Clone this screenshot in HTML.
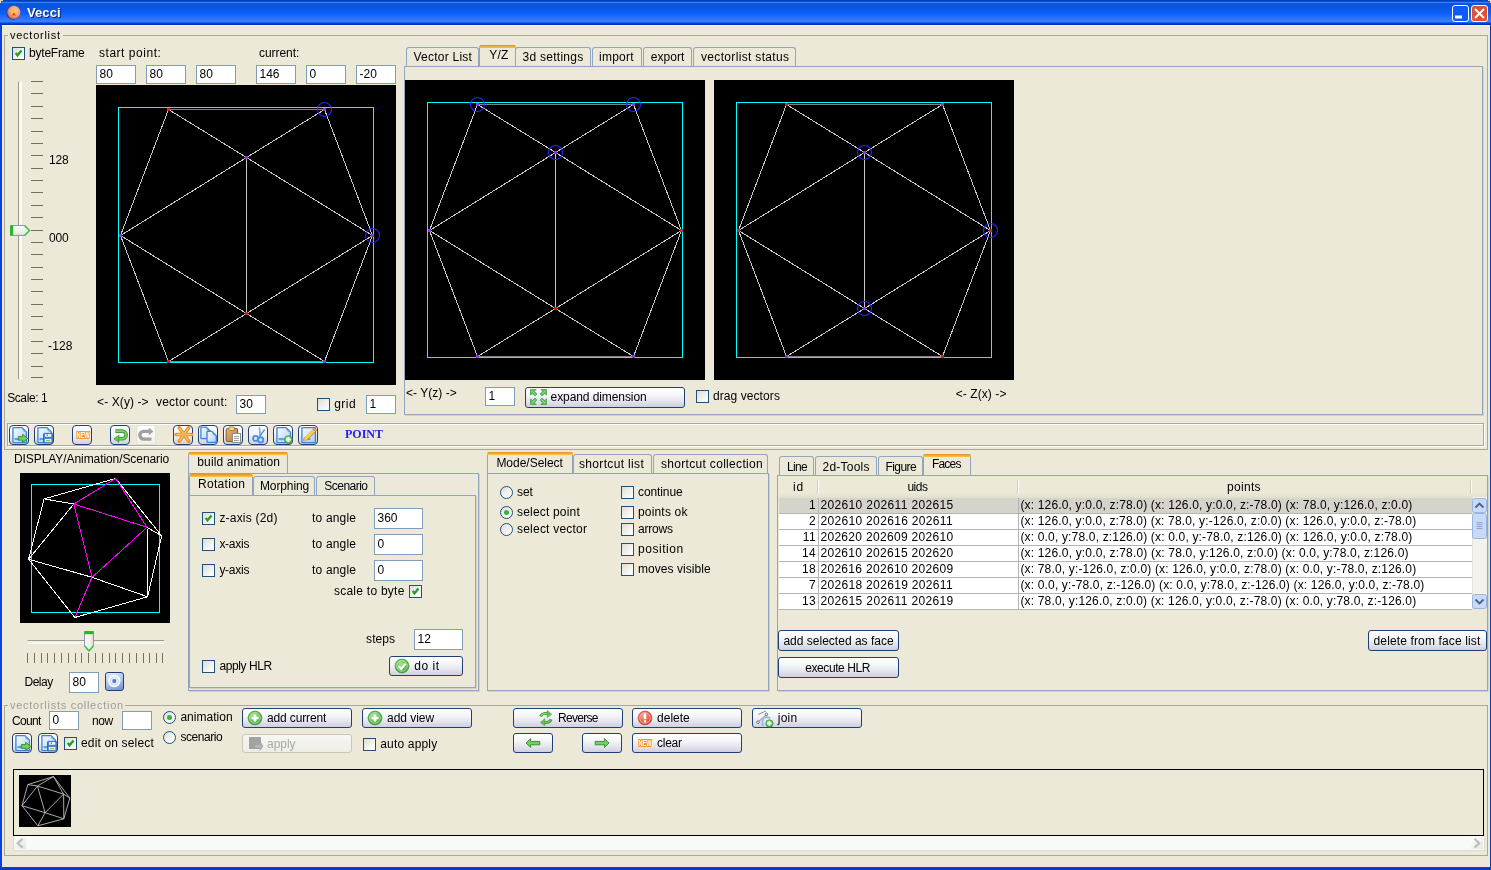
<!DOCTYPE html>
<html><head><meta charset="utf-8"><title>Vecci</title><style>
*{margin:0;padding:0;box-sizing:border-box}
html,body{width:1491px;height:870px;overflow:hidden;background:#ECE9D8;font-family:'Liberation Sans', sans-serif;font-size:12px;color:#000}
#root{position:absolute;left:0;top:0;width:1491px;height:870px;overflow:hidden;will-change:transform;background:#ECE9D8}
.t{position:absolute;white-space:pre}
svg{display:block}
</style></head><body><div id="root">
<div style="position:absolute;left:0;top:0;width:1491px;height:25px;background:linear-gradient(#0036B0 0px,#0A4FD8 1.5px,#3A80F8 2.5px,#0855F5 3.5px,#0A54E0 5px,#0C56E6 9px,#0A60FF 13.5px,#1E6AFF 16px,#3478FF 20px,#3A80FF 21.5px,#1860F0 22.5px,#0840C8 23.5px,#0032B8 24.5px);"></div>
<div style="position:absolute;left:0px;top:25px;width:2px;height:845px;background:#0842DC;"></div>
<div style="position:absolute;left:0px;top:0px;width:3px;height:1px;background:#D8D6C4;"></div>
<div style="position:absolute;left:0px;top:1px;width:1px;height:2px;background:#D8D6C4;"></div>
<div style="position:absolute;left:1488px;top:0px;width:3px;height:1px;background:#D8D6C4;"></div>
<div style="position:absolute;left:1490px;top:1px;width:1px;height:2px;background:#D8D6C4;"></div>
<div style="position:absolute;left:1490px;top:25px;width:1px;height:845px;background:#0A36B4;"></div>
<div style="position:absolute;left:0px;top:867px;width:1491px;height:3px;background:linear-gradient(#0A44DA,#0834B8);"></div>
<div style="position:absolute;left:2px;top:25px;width:1488px;height:1px;background:#FDF6E0;"></div>
<svg style="position:absolute;left:6px;top:4px;" width="16" height="17" viewBox="0 0 16 17"><defs><radialGradient id="ic" cx="55%" cy="40%" r="60%"><stop offset="0" stop-color="#FAD0C4"/><stop offset="0.65" stop-color="#EC9A88"/><stop offset="1" stop-color="#C87060"/></radialGradient></defs><circle cx="7.3" cy="8.9" r="6.9" fill="#5A3A34"/><circle cx="7.9" cy="8.3" r="6.6" fill="url(#ic)"/><path d="M7.9 3.2 C9.8 5.6 10.9 8 10.2 11.2 L5.6 11.2 C5 8.2 6.2 5.8 7.9 3.2Z" fill="#F9C23C"/><path d="M5.6 11.6 L7.9 8.4 L10.2 11.6Z" fill="#E8401C"/></svg>
<div class="t" style="left:28.00px;top:7px;font-size:13px;line-height:13px;letter-spacing:0.089px;color:#0A246A;font-weight:bold;">Vecci</div>
<div class="t" style="left:27.00px;top:6px;font-size:13px;line-height:13px;letter-spacing:0.089px;color:#fff;font-weight:bold;">Vecci</div>
<svg style="position:absolute;left:1452px;top:5px;" width="17" height="17" viewBox="0 0 17 17"><rect x="0.5" y="0.5" width="16" height="16" rx="2.5" fill="#0D5BFF" stroke="#fff"/><rect x="3" y="10.5" width="7" height="3" fill="#fff"/></svg>
<svg style="position:absolute;left:1471px;top:5px;" width="17" height="17" viewBox="0 0 17 17"><rect x="0.5" y="0.5" width="16" height="16" rx="2.5" fill="#E0512F" stroke="#fff"/><path d="M4 4 L13 13 M13 4 L4 13" stroke="#fff" stroke-width="2"/></svg>
<div style="position:absolute;left:4px;top:35px;width:1484px;height:415px;border:1px solid #ACA899;"></div>
<div style="position:absolute;left:8px;top:31px;width:55px;height:8px;background:#ECE9D8;"></div>
<div class="t" style="left:10.00px;top:30px;font-size:11px;line-height:11px;letter-spacing:0.740px;">vectorlist</div>
<div style="position:absolute;left:12px;top:47px;width:13px;height:13px;border:1px solid #1C5180;background:linear-gradient(135deg,#DCDCD7 0%,#F4F4F0 60%,#FFFFFF 100%);"></div>
<svg style="position:absolute;left:13px;top:48px;" width="11" height="11" viewBox="0 0 11 11"><path d="M2.7 4.8 L4.5 7.3 L8.5 2.6" stroke="#21A121" stroke-width="2.3" fill="none" stroke-linecap="butt" stroke-linejoin="miter"/></svg>
<div class="t" style="left:29.00px;top:47px;font-size:12px;line-height:12px;letter-spacing:-0.210px;">byteFrame</div>
<div class="t" style="left:99.00px;top:47px;font-size:12px;line-height:12px;letter-spacing:0.528px;">start point:</div>
<div class="t" style="left:259.00px;top:47px;font-size:12px;line-height:12px;letter-spacing:-0.050px;">current:</div>
<div style="position:absolute;left:96px;top:65px;width:40px;height:19px;border:1px solid #7F9DB9;background:#fff;"></div>
<div class="t" style="left:99.50px;top:68px;font-size:12px;line-height:12px;">80</div>
<div style="position:absolute;left:146px;top:65px;width:40px;height:19px;border:1px solid #7F9DB9;background:#fff;"></div>
<div class="t" style="left:149.50px;top:68px;font-size:12px;line-height:12px;">80</div>
<div style="position:absolute;left:196px;top:65px;width:40px;height:19px;border:1px solid #7F9DB9;background:#fff;"></div>
<div class="t" style="left:199.50px;top:68px;font-size:12px;line-height:12px;">80</div>
<div style="position:absolute;left:256px;top:65px;width:40px;height:19px;border:1px solid #7F9DB9;background:#fff;"></div>
<div class="t" style="left:259.50px;top:68px;font-size:12px;line-height:12px;">146</div>
<div style="position:absolute;left:306px;top:65px;width:40px;height:19px;border:1px solid #7F9DB9;background:#fff;"></div>
<div class="t" style="left:309.50px;top:68px;font-size:12px;line-height:12px;">0</div>
<div style="position:absolute;left:356px;top:65px;width:40px;height:19px;border:1px solid #7F9DB9;background:#fff;"></div>
<div class="t" style="left:359.50px;top:68px;font-size:12px;line-height:12px;">-20</div>
<div style="position:absolute;left:18px;top:81px;width:4px;height:298px;border-left:1px solid #9C9A8C;border-radius:2px 2px 0 0;background:linear-gradient(90deg,#F6F4EC,#FFFFFF);"></div>
<svg style="position:absolute;left:31px;top:0px;" width="12" height="390" viewBox="0 0 12 390"><rect x="0" y="81" width="12" height="1" fill="#74725F"/><rect x="0" y="93" width="12" height="1" fill="#74725F"/><rect x="0" y="106" width="12" height="1" fill="#74725F"/><rect x="0" y="118" width="12" height="1" fill="#74725F"/><rect x="0" y="131" width="12" height="1" fill="#74725F"/><rect x="0" y="143" width="12" height="1" fill="#74725F"/><rect x="0" y="155" width="12" height="1" fill="#74725F"/><rect x="0" y="168" width="12" height="1" fill="#74725F"/><rect x="0" y="180" width="12" height="1" fill="#74725F"/><rect x="0" y="192" width="12" height="1" fill="#74725F"/><rect x="0" y="205" width="12" height="1" fill="#74725F"/><rect x="0" y="217" width="12" height="1" fill="#74725F"/><rect x="0" y="230" width="12" height="1" fill="#74725F"/><rect x="0" y="242" width="12" height="1" fill="#74725F"/><rect x="0" y="254" width="12" height="1" fill="#74725F"/><rect x="0" y="267" width="12" height="1" fill="#74725F"/><rect x="0" y="279" width="12" height="1" fill="#74725F"/><rect x="0" y="291" width="12" height="1" fill="#74725F"/><rect x="0" y="304" width="12" height="1" fill="#74725F"/><rect x="0" y="316" width="12" height="1" fill="#74725F"/><rect x="0" y="329" width="12" height="1" fill="#74725F"/><rect x="0" y="341" width="12" height="1" fill="#74725F"/><rect x="0" y="353" width="12" height="1" fill="#74725F"/><rect x="0" y="366" width="12" height="1" fill="#74725F"/><rect x="0" y="377" width="12" height="1" fill="#74725F"/></svg>
<svg style="position:absolute;left:9px;top:224px;" width="24" height="13" viewBox="0 0 24 13"><defs><linearGradient id="th1" x1="0" y1="0" x2="0" y2="1"><stop offset="0" stop-color="#FAFAF6"/><stop offset="0.7" stop-color="#F0EFE8"/><stop offset="1" stop-color="#D8D6CC"/></linearGradient></defs><path d="M1.5 1.5 H16 L21 6.5 L16 11.5 H1.5 Z" fill="url(#th1)" stroke="#8A9AB4"/><rect x="1" y="1.5" width="3.2" height="10" fill="#22B828"/><path d="M15.6 1.8 L20.4 6.5 L15.6 11.2" fill="none" stroke="#36C83A" stroke-width="1.3"/></svg>
<div class="t" style="left:49.00px;top:154px;font-size:12px;line-height:12px;letter-spacing:-0.174px;">128</div>
<div class="t" style="left:49.00px;top:232px;font-size:12px;line-height:12px;letter-spacing:-0.174px;">000</div>
<div class="t" style="left:48.00px;top:340px;font-size:12px;line-height:12px;letter-spacing:0.152px;">-128</div>
<div class="t" style="left:7.20px;top:392px;font-size:12px;line-height:12px;letter-spacing:-0.412px;">Scale: 1</div>
<svg style="position:absolute;left:96px;top:85px;" width="300" height="300" viewBox="0 0 300 300"><rect x="0" y="0" width="300" height="300" fill="#000"/><rect x="22.5" y="22.5" width="255" height="255" fill="none" stroke="#00FFFF" stroke-width="1"/><line x1="150.5" y1="72.5" x2="228.5" y2="24.5" stroke="#C8C8C8" stroke-width="1" shape-rendering="crispEdges"/><line x1="150.5" y1="72.5" x2="276.5" y2="150.5" stroke="#C8C8C8" stroke-width="1" shape-rendering="crispEdges"/><line x1="24.5" y1="150.5" x2="150.5" y2="72.5" stroke="#C8C8C8" stroke-width="1" shape-rendering="crispEdges"/><line x1="150.5" y1="228.5" x2="150.5" y2="72.5" stroke="#C8C8C8" stroke-width="1" shape-rendering="crispEdges"/><line x1="72.5" y1="24.5" x2="150.5" y2="72.5" stroke="#C8C8C8" stroke-width="1" shape-rendering="crispEdges"/><line x1="228.5" y1="24.5" x2="276.5" y2="150.5" stroke="#C8C8C8" stroke-width="1" shape-rendering="crispEdges"/><line x1="72.5" y1="24.5" x2="228.5" y2="24.5" stroke="#848080" stroke-width="1" shape-rendering="crispEdges"/><line x1="228.5" y1="276.5" x2="276.5" y2="150.5" stroke="#C8C8C8" stroke-width="1" shape-rendering="crispEdges"/><line x1="150.5" y1="228.5" x2="276.5" y2="150.5" stroke="#C8C8C8" stroke-width="1" shape-rendering="crispEdges"/><line x1="150.5" y1="228.5" x2="228.5" y2="276.5" stroke="#C8C8C8" stroke-width="1" shape-rendering="crispEdges"/><line x1="72.5" y1="276.5" x2="228.5" y2="276.5" stroke="#848080" stroke-width="1" shape-rendering="crispEdges"/><line x1="24.5" y1="150.5" x2="150.5" y2="228.5" stroke="#C8C8C8" stroke-width="1" shape-rendering="crispEdges"/><line x1="24.5" y1="150.5" x2="72.5" y2="24.5" stroke="#C8C8C8" stroke-width="1" shape-rendering="crispEdges"/><line x1="24.5" y1="150.5" x2="72.5" y2="276.5" stroke="#C8C8C8" stroke-width="1" shape-rendering="crispEdges"/><line x1="72.5" y1="276.5" x2="150.5" y2="228.5" stroke="#C8C8C8" stroke-width="1" shape-rendering="crispEdges"/><rect x="71" y="23" width="3" height="3" fill="#FF1010"/><rect x="227" y="23" width="3" height="3" fill="#9A2EF0"/><rect x="149" y="71" width="3" height="3" fill="#9A2EF0"/><rect x="23" y="149" width="3" height="3" fill="#9A2EF0"/><rect x="275" y="149" width="3" height="3" fill="#9A2EF0"/><rect x="149" y="227" width="3" height="3" fill="#FF1010"/><rect x="71" y="275" width="3" height="3" fill="#FF1010"/><rect x="227" y="275" width="3" height="3" fill="#9A2EF0"/><circle cx="228.5" cy="24.5" r="7" fill="none" stroke="#2828FF" stroke-width="1.1"/><circle cx="276.5" cy="150.5" r="7" fill="none" stroke="#2828FF" stroke-width="1.1"/></svg>
<div class="t" style="left:97.10px;top:396px;font-size:12px;line-height:12px;letter-spacing:0.093px;">&lt;- X(y) -&gt;</div>
<div class="t" style="left:156.00px;top:396px;font-size:12px;line-height:12px;letter-spacing:0.219px;">vector count:</div>
<div style="position:absolute;left:236px;top:395px;width:30px;height:19px;border:1px solid #7F9DB9;background:#fff;"></div>
<div class="t" style="left:239.50px;top:398px;font-size:12px;line-height:12px;">30</div>
<div style="position:absolute;left:317px;top:398px;width:13px;height:13px;border:1px solid #1C5180;background:linear-gradient(135deg,#DCDCD7 0%,#F4F4F0 60%,#FFFFFF 100%);"></div>
<div class="t" style="left:334.20px;top:398px;font-size:12px;line-height:12px;letter-spacing:0.455px;">grid</div>
<div style="position:absolute;left:366px;top:395px;width:30px;height:19px;border:1px solid #7F9DB9;background:#fff;"></div>
<div class="t" style="left:369.50px;top:398px;font-size:12px;line-height:12px;">1</div>
<div style="position:absolute;left:405px;top:67px;width:1079px;height:349px;border-right:1px solid #D6D2BE;border-bottom:1px solid #D6D2BE;"></div>
<div style="position:absolute;left:404px;top:66px;width:1079px;height:349px;border:1px solid #91A5BE;"></div>
<div style="position:absolute;left:406px;top:47px;width:73px;height:19px;border:1px solid #91A5BE;border-bottom:none;border-radius:3px 3px 0 0;background:#ECE9D8;"></div>
<div style="position:absolute;left:515px;top:47px;width:76px;height:19px;border:1px solid #91A5BE;border-bottom:none;border-radius:3px 3px 0 0;background:#ECE9D8;"></div>
<div style="position:absolute;left:592px;top:47px;width:50px;height:19px;border:1px solid #91A5BE;border-bottom:none;border-radius:3px 3px 0 0;background:#ECE9D8;"></div>
<div style="position:absolute;left:643px;top:47px;width:49px;height:19px;border:1px solid #91A5BE;border-bottom:none;border-radius:3px 3px 0 0;background:#ECE9D8;"></div>
<div style="position:absolute;left:693px;top:47px;width:103px;height:19px;border:1px solid #91A5BE;border-bottom:none;border-radius:3px 3px 0 0;background:#ECE9D8;"></div>
<div style="position:absolute;left:479px;top:45px;width:37px;height:21px;border:1px solid #91A5BE;border-bottom:none;border-radius:3px 3px 0 0;background:#ECE9D8;"></div>
<div style="position:absolute;left:479px;top:45px;width:37px;height:3px;border-radius:3px 3px 0 0;background:linear-gradient(#E68B2C,#FFC73C);"></div>
<div class="t" style="left:413.50px;top:51px;font-size:12px;line-height:12px;letter-spacing:0.231px;">Vector List</div>
<div class="t" style="left:489.30px;top:49px;font-size:12px;line-height:12px;letter-spacing:0.181px;">Y/Z</div>
<div class="t" style="left:522.60px;top:51px;font-size:12px;line-height:12px;letter-spacing:0.256px;">3d settings</div>
<div class="t" style="left:599.00px;top:51px;font-size:12px;line-height:12px;letter-spacing:0.239px;">import</div>
<div class="t" style="left:650.80px;top:51px;font-size:12px;line-height:12px;letter-spacing:0.016px;">export</div>
<div class="t" style="left:701.00px;top:51px;font-size:12px;line-height:12px;letter-spacing:0.332px;">vectorlist status</div>
<svg style="position:absolute;left:405px;top:80px;" width="300" height="300" viewBox="0 0 300 300"><rect x="0" y="0" width="300" height="300" fill="#000"/><rect x="22.5" y="22.5" width="255" height="255" fill="none" stroke="#00FFFF" stroke-width="1"/><line x1="228.5" y1="24.5" x2="276.5" y2="150.5" stroke="#C8C8C8" stroke-width="1" shape-rendering="crispEdges"/><line x1="150.5" y1="72.5" x2="228.5" y2="24.5" stroke="#C8C8C8" stroke-width="1" shape-rendering="crispEdges"/><line x1="72.5" y1="24.5" x2="228.5" y2="24.5" stroke="#848080" stroke-width="1" shape-rendering="crispEdges"/><line x1="150.5" y1="72.5" x2="276.5" y2="150.5" stroke="#C8C8C8" stroke-width="1" shape-rendering="crispEdges"/><line x1="228.5" y1="276.5" x2="276.5" y2="150.5" stroke="#C8C8C8" stroke-width="1" shape-rendering="crispEdges"/><line x1="150.5" y1="228.5" x2="276.5" y2="150.5" stroke="#C8C8C8" stroke-width="1" shape-rendering="crispEdges"/><line x1="24.5" y1="150.5" x2="150.5" y2="72.5" stroke="#C8C8C8" stroke-width="1" shape-rendering="crispEdges"/><line x1="72.5" y1="24.5" x2="150.5" y2="72.5" stroke="#C8C8C8" stroke-width="1" shape-rendering="crispEdges"/><line x1="150.5" y1="228.5" x2="150.5" y2="72.5" stroke="#C8C8C8" stroke-width="1" shape-rendering="crispEdges"/><line x1="150.5" y1="228.5" x2="228.5" y2="276.5" stroke="#C8C8C8" stroke-width="1" shape-rendering="crispEdges"/><line x1="72.5" y1="276.5" x2="228.5" y2="276.5" stroke="#848080" stroke-width="1" shape-rendering="crispEdges"/><line x1="24.5" y1="150.5" x2="72.5" y2="24.5" stroke="#C8C8C8" stroke-width="1" shape-rendering="crispEdges"/><line x1="24.5" y1="150.5" x2="150.5" y2="228.5" stroke="#C8C8C8" stroke-width="1" shape-rendering="crispEdges"/><line x1="24.5" y1="150.5" x2="72.5" y2="276.5" stroke="#C8C8C8" stroke-width="1" shape-rendering="crispEdges"/><line x1="72.5" y1="276.5" x2="150.5" y2="228.5" stroke="#C8C8C8" stroke-width="1" shape-rendering="crispEdges"/><rect x="71" y="23" width="3" height="3" fill="#9A2EF0"/><rect x="227" y="23" width="3" height="3" fill="#9A2EF0"/><rect x="149" y="71" width="3" height="3" fill="#9A2EF0"/><rect x="23" y="149" width="3" height="3" fill="#9A2EF0"/><rect x="275" y="149" width="3" height="3" fill="#FF1010"/><rect x="149" y="227" width="3" height="3" fill="#FF1010"/><rect x="71" y="275" width="3" height="3" fill="#9A2EF0"/><rect x="227" y="275" width="3" height="3" fill="#9A2EF0"/><circle cx="72.5" cy="24.5" r="7" fill="none" stroke="#2828FF" stroke-width="1.1"/><circle cx="228.5" cy="24.5" r="7" fill="none" stroke="#2828FF" stroke-width="1.1"/><circle cx="150.5" cy="72.5" r="7" fill="none" stroke="#2828FF" stroke-width="1.1"/></svg>
<svg style="position:absolute;left:714px;top:80px;" width="300" height="300" viewBox="0 0 300 300"><rect x="0" y="0" width="300" height="300" fill="#000"/><rect x="22.5" y="22.5" width="255" height="255" fill="none" stroke="#00FFFF" stroke-width="1"/><line x1="150.5" y1="72.5" x2="276.5" y2="150.5" stroke="#C8C8C8" stroke-width="1" shape-rendering="crispEdges"/><line x1="228.5" y1="24.5" x2="276.5" y2="150.5" stroke="#C8C8C8" stroke-width="1" shape-rendering="crispEdges"/><line x1="228.5" y1="276.5" x2="276.5" y2="150.5" stroke="#C8C8C8" stroke-width="1" shape-rendering="crispEdges"/><line x1="150.5" y1="228.5" x2="276.5" y2="150.5" stroke="#C8C8C8" stroke-width="1" shape-rendering="crispEdges"/><line x1="150.5" y1="72.5" x2="228.5" y2="24.5" stroke="#C8C8C8" stroke-width="1" shape-rendering="crispEdges"/><line x1="24.5" y1="150.5" x2="150.5" y2="72.5" stroke="#C8C8C8" stroke-width="1" shape-rendering="crispEdges"/><line x1="150.5" y1="228.5" x2="150.5" y2="72.5" stroke="#C8C8C8" stroke-width="1" shape-rendering="crispEdges"/><line x1="72.5" y1="24.5" x2="150.5" y2="72.5" stroke="#C8C8C8" stroke-width="1" shape-rendering="crispEdges"/><line x1="72.5" y1="24.5" x2="228.5" y2="24.5" stroke="#848080" stroke-width="1" shape-rendering="crispEdges"/><line x1="24.5" y1="150.5" x2="150.5" y2="228.5" stroke="#C8C8C8" stroke-width="1" shape-rendering="crispEdges"/><line x1="24.5" y1="150.5" x2="72.5" y2="24.5" stroke="#C8C8C8" stroke-width="1" shape-rendering="crispEdges"/><line x1="24.5" y1="150.5" x2="72.5" y2="276.5" stroke="#C8C8C8" stroke-width="1" shape-rendering="crispEdges"/><line x1="150.5" y1="228.5" x2="228.5" y2="276.5" stroke="#C8C8C8" stroke-width="1" shape-rendering="crispEdges"/><line x1="72.5" y1="276.5" x2="228.5" y2="276.5" stroke="#848080" stroke-width="1" shape-rendering="crispEdges"/><line x1="72.5" y1="276.5" x2="150.5" y2="228.5" stroke="#C8C8C8" stroke-width="1" shape-rendering="crispEdges"/><rect x="71" y="23" width="3" height="3" fill="#FF1010"/><rect x="227" y="23" width="3" height="3" fill="#9A2EF0"/><rect x="149" y="71" width="3" height="3" fill="#9A2EF0"/><rect x="23" y="149" width="3" height="3" fill="#FF1010"/><rect x="275" y="149" width="3" height="3" fill="#FF1010"/><rect x="149" y="227" width="3" height="3" fill="#9A2EF0"/><rect x="71" y="275" width="3" height="3" fill="#9A2EF0"/><rect x="227" y="275" width="3" height="3" fill="#FF1010"/><circle cx="150.5" cy="72.5" r="7" fill="none" stroke="#2828FF" stroke-width="1.1"/><circle cx="276.5" cy="150.5" r="7" fill="none" stroke="#2828FF" stroke-width="1.1"/><circle cx="150.5" cy="228.5" r="7" fill="none" stroke="#2828FF" stroke-width="1.1"/></svg>
<div class="t" style="left:406.00px;top:387px;font-size:12px;line-height:12px;letter-spacing:0.037px;">&lt;- Y(z) -&gt;</div>
<div style="position:absolute;left:485px;top:387px;width:30px;height:19px;border:1px solid #7F9DB9;background:#fff;"></div>
<div class="t" style="left:488.50px;top:390px;font-size:12px;line-height:12px;">1</div>
<div style="position:absolute;left:525px;top:387px;width:160px;height:21px;border:1px solid #1F3F78;border-radius:3px;background:linear-gradient(#FFFFFF 0%,#F6F6FA 35%,#E4E4EE 70%,#CFCFDF 100%);"></div>
<svg style="position:absolute;left:529.5px;top:389px;" width="17" height="16" viewBox="0 0 17 16"><g transform=""><path d="M0.5 0.5 H6.2 L4.4 2.3 L7 4.9 L4.9 7 L2.3 4.4 L0.5 6.2Z" fill="#62BE5C" stroke="#3E9E3C" stroke-width="0.7" stroke-linejoin="round"/><path d="M1.8 1.8 L5.4 5.4" stroke="#A6DE98" stroke-width="0.9"/></g><g transform="translate(17,0) scale(-1,1)"><path d="M0.5 0.5 H6.2 L4.4 2.3 L7 4.9 L4.9 7 L2.3 4.4 L0.5 6.2Z" fill="#62BE5C" stroke="#3E9E3C" stroke-width="0.7" stroke-linejoin="round"/><path d="M1.8 1.8 L5.4 5.4" stroke="#A6DE98" stroke-width="0.9"/></g><g transform="translate(0,16) scale(1,-1)"><path d="M0.5 0.5 H6.2 L4.4 2.3 L7 4.9 L4.9 7 L2.3 4.4 L0.5 6.2Z" fill="#62BE5C" stroke="#3E9E3C" stroke-width="0.7" stroke-linejoin="round"/><path d="M1.8 1.8 L5.4 5.4" stroke="#A6DE98" stroke-width="0.9"/></g><g transform="translate(17,16) scale(-1,-1)"><path d="M0.5 0.5 H6.2 L4.4 2.3 L7 4.9 L4.9 7 L2.3 4.4 L0.5 6.2Z" fill="#62BE5C" stroke="#3E9E3C" stroke-width="0.7" stroke-linejoin="round"/><path d="M1.8 1.8 L5.4 5.4" stroke="#A6DE98" stroke-width="0.9"/></g></svg>
<div class="t" style="left:550.60px;top:391px;font-size:12px;line-height:12px;letter-spacing:-0.088px;">expand dimension</div>
<div style="position:absolute;left:696px;top:390px;width:13px;height:13px;border:1px solid #1C5180;background:linear-gradient(135deg,#DCDCD7 0%,#F4F4F0 60%,#FFFFFF 100%);"></div>
<div class="t" style="left:712.90px;top:390px;font-size:12px;line-height:12px;letter-spacing:0.088px;">drag vectors</div>
<div class="t" style="left:955.70px;top:388px;font-size:12px;line-height:12px;letter-spacing:0.079px;">&lt;- Z(x) -&gt;</div>
<div style="position:absolute;left:8px;top:424px;width:1477px;height:23px;border:1px solid #FFFFFF;"></div>
<div style="position:absolute;left:7px;top:423px;width:1477px;height:23px;border:1px solid #ACA899;"></div>
<div style="position:absolute;left:9px;top:425px;width:20px;height:20px;border:1.6px solid #1F3F78;border-radius:4px;background:linear-gradient(#FFFFFF 0%,#F4F4F8 45%,#D2D2E0 100%);"></div>
<svg style="position:absolute;left:9px;top:425px;" width="20" height="20" viewBox="0 0 20 20"><defs><linearGradient id="dg1" x1="0" y1="0" x2="1" y2="1"><stop offset="0" stop-color="#F6FAFF"/><stop offset="0.5" stop-color="#D6E7FB"/><stop offset="1" stop-color="#A9CBF2"/></linearGradient></defs><path d="M4.6 2.6 H12.999999999999998 L17.4 7.0 V16.900000000000002 Q17.4 17.6 16.7 17.6 H4.6 Q3.9 17.6 3.9 16.900000000000002 V3.3 Q3.9 2.6 4.6 2.6Z" fill="url(#dg1)" stroke="#3F80D2" stroke-width="1.3"/><path d="M12.999999999999998 2.6 Q13.299999999999999 6.7 17.4 7.0" fill="none" stroke="#6FA0E0" stroke-width="0.9"/><rect x="5.5" y="13.000000000000002" width="6.749999999999999" height="2.2" fill="#44ABF2"/><path d="M9.3 11.6 H13.6 V9.2 L18.8 13.4 L13.6 17.6 V15.2 H9.3Z" fill="#7ACB66" stroke="#2E8A24" stroke-width="0.9" stroke-linejoin="round"/></svg>
<div style="position:absolute;left:34px;top:425px;width:20px;height:20px;border:1.6px solid #1F3F78;border-radius:4px;background:linear-gradient(#FFFFFF 0%,#F4F4F8 45%,#D2D2E0 100%);"></div>
<svg style="position:absolute;left:34px;top:425px;" width="20" height="20" viewBox="0 0 20 20"><defs><linearGradient id="dg2" x1="0" y1="0" x2="1" y2="1"><stop offset="0" stop-color="#F6FAFF"/><stop offset="0.5" stop-color="#D6E7FB"/><stop offset="1" stop-color="#A9CBF2"/></linearGradient></defs><path d="M4.6 2.6 H12.999999999999998 L17.4 7.0 V16.900000000000002 Q17.4 17.6 16.7 17.6 H4.6 Q3.9 17.6 3.9 16.900000000000002 V3.3 Q3.9 2.6 4.6 2.6Z" fill="url(#dg2)" stroke="#3F80D2" stroke-width="1.3"/><path d="M12.999999999999998 2.6 Q13.299999999999999 6.7 17.4 7.0" fill="none" stroke="#6FA0E0" stroke-width="0.9"/><rect x="5.5" y="13.000000000000002" width="6.749999999999999" height="2.2" fill="#44ABF2"/><rect x="9.5" y="8.4" width="9.2" height="9.4" rx="0.8" fill="#4A82D4" stroke="#2C5CA8" stroke-width="0.8"/><rect x="11" y="9.1" width="6.2" height="2.6" fill="#FFFFFF"/><rect x="12.7" y="9.4" width="1" height="1.6" fill="#2C5CA8"/><rect x="10.9" y="14" width="6.4" height="3.2" fill="#F4F8FF"/><rect x="12" y="14.9" width="4.2" height="1.5" fill="#8CCB40"/></svg>
<div style="position:absolute;left:72px;top:425px;width:20px;height:20px;border:1.6px solid #1F3F78;border-radius:4px;background:linear-gradient(#FFFFFF 0%,#F4F4F8 45%,#D2D2E0 100%);"></div>
<svg style="position:absolute;left:72px;top:425px;" width="20" height="20" viewBox="0 0 20 20"><text x="4.4" y="12.8" textLength="13.2" lengthAdjust="spacingAndGlyphs" font-family="Liberation Sans" font-weight="bold" font-size="8.2" fill="#FFFFFF" stroke="#F7941D" stroke-width="2.2" stroke-linejoin="round" paint-order="stroke">NEW</text></svg>
<div style="position:absolute;left:110px;top:425px;width:20px;height:20px;border:1.6px solid #1F3F78;border-radius:4px;background:linear-gradient(#FFFFFF 0%,#F4F4F8 45%,#D2D2E0 100%);"></div>
<svg style="position:absolute;left:110px;top:425px;" width="20" height="20" viewBox="0 0 20 20"><path d="M5.4 6.1 H12.3 A3.85 3.85 0 0 1 12.3 13.8 H8" fill="none" stroke="#3C9A30" stroke-width="3.6"/><path d="M5.4 6.1 H12.3 A3.85 3.85 0 0 1 12.3 13.8 H8" fill="none" stroke="#86D070" stroke-width="1.6"/><path d="M4 13.8 L8.8 10.3 V17.3Z" fill="#6CC058" stroke="#3C9A30" stroke-width="0.8"/></svg>
<div style="position:absolute;left:136px;top:425px;width:20px;height:20px;border:1px solid #E2E0D6;border-radius:3px;background:linear-gradient(#FFFFFF,#F1F0EA);"></div>
<svg style="position:absolute;left:136px;top:425px;" width="20" height="20" viewBox="0 0 20 20"><path d="M14.6 6.4 H7.7 A3.85 3.85 0 0 0 7.7 14.1 H15.5" fill="none" stroke="#A0A0A0" stroke-width="3.4"/><path d="M17.4 6.4 L12.8 2.6 V10.2Z" fill="#A0A0A0"/></svg>
<div style="position:absolute;left:173px;top:425px;width:20px;height:20px;border:1.6px solid #1F3F78;border-radius:4px;background:linear-gradient(#FFFFFF 0%,#F4F4F8 45%,#D2D2E0 100%);"></div>
<svg style="position:absolute;left:173px;top:425px;" width="20" height="20" viewBox="0 0 20 20"><g stroke="#EE9220" stroke-width="3.6" stroke-linecap="round"><path d="M3.2 9.5 H18.8"/><path d="M6.3 2.8 L15.7 16.2"/><path d="M15.7 2.8 L6.3 16.2"/></g><g stroke="#FFC468" stroke-width="1.3" stroke-linecap="round"><path d="M4 9.5 H18"/><path d="M6.8 3.6 L15.2 15.4"/><path d="M15.2 3.6 L6.8 15.4"/></g><circle cx="11" cy="9.5" r="2" fill="#F8B040"/></svg>
<div style="position:absolute;left:198px;top:425px;width:20px;height:20px;border:1.6px solid #1F3F78;border-radius:4px;background:linear-gradient(#FFFFFF 0%,#F4F4F8 45%,#D2D2E0 100%);"></div>
<svg style="position:absolute;left:198px;top:425px;" width="20" height="20" viewBox="0 0 20 20"><defs><linearGradient id="dg3" x1="0" y1="0" x2="1" y2="1"><stop offset="0" stop-color="#F6FAFF"/><stop offset="0.5" stop-color="#D6E7FB"/><stop offset="1" stop-color="#A9CBF2"/></linearGradient></defs><path d="M3.5999999999999996 2.2 H8.299999999999999 L12.7 6.6000000000000005 V12.9 Q12.7 13.6 12.0 13.6 H3.5999999999999996 Q2.9 13.6 2.9 12.9 V2.9000000000000004 Q2.9 2.2 3.5999999999999996 2.2Z" fill="url(#dg3)" stroke="#3F80D2" stroke-width="1.3"/><path d="M8.299999999999999 2.2 Q8.6 6.300000000000001 12.7 6.6000000000000005" fill="none" stroke="#6FA0E0" stroke-width="0.9"/><defs><linearGradient id="dg4" x1="0" y1="0" x2="1" y2="1"><stop offset="0" stop-color="#F6FAFF"/><stop offset="0.5" stop-color="#D6E7FB"/><stop offset="1" stop-color="#A9CBF2"/></linearGradient></defs><path d="M9.7 6.4 H13.9 L18.3 10.8 V16.7 Q18.3 17.4 17.6 17.4 H9.7 Q9.0 17.4 9.0 16.7 V7.1000000000000005 Q9.0 6.4 9.7 6.4Z" fill="url(#dg4)" stroke="#3F80D2" stroke-width="1.3"/><path d="M13.9 6.4 Q14.200000000000001 10.5 18.3 10.8" fill="none" stroke="#6FA0E0" stroke-width="0.9"/></svg>
<div style="position:absolute;left:223px;top:425px;width:20px;height:20px;border:1.6px solid #1F3F78;border-radius:4px;background:linear-gradient(#FFFFFF 0%,#F4F4F8 45%,#D2D2E0 100%);"></div>
<svg style="position:absolute;left:223px;top:425px;" width="20" height="20" viewBox="0 0 20 20"><defs><linearGradient id="pb" x1="0" y1="0" x2="1" y2="1"><stop offset="0" stop-color="#E8B878"/><stop offset="1" stop-color="#B87830"/></linearGradient></defs><rect x="3.2" y="3.4" width="11.4" height="13.2" rx="1.4" fill="url(#pb)" stroke="#8A5418" stroke-width="1"/><rect x="5.8" y="2" width="5.6" height="3.4" rx="0.8" fill="#F4E090" stroke="#9A7020" stroke-width="0.8"/><rect x="9.5" y="8.5" width="8" height="9" fill="#FFFFFF" stroke="#8C8C8C" stroke-width="1"/><path d="M11 11.5 H16 M11 13.5 H16 M11 15.5 H16" stroke="#A0A0A0" stroke-width="1"/></svg>
<div style="position:absolute;left:248px;top:425px;width:20px;height:20px;border:1.6px solid #1F3F78;border-radius:4px;background:linear-gradient(#FFFFFF 0%,#F4F4F8 45%,#D2D2E0 100%);"></div>
<svg style="position:absolute;left:248px;top:425px;" width="20" height="20" viewBox="0 0 20 20"><g fill="none" stroke="#4A94DC" stroke-width="1.5"><path d="M11.4 2.2 L12.2 11.4"/><path d="M16.8 4.4 L11.6 11.4"/><circle cx="7.6" cy="13.4" r="2.5" stroke-width="1.9"/><circle cx="12.7" cy="14.9" r="2.6" stroke-width="1.9"/></g><path d="M11.6 2.6 L12 9" stroke="#C8E0F8" stroke-width="0.6"/></svg>
<div style="position:absolute;left:273px;top:425px;width:20px;height:20px;border:1.6px solid #1F3F78;border-radius:4px;background:linear-gradient(#FFFFFF 0%,#F4F4F8 45%,#D2D2E0 100%);"></div>
<svg style="position:absolute;left:273px;top:425px;" width="20" height="20" viewBox="0 0 20 20"><defs><linearGradient id="dg5" x1="0" y1="0" x2="1" y2="1"><stop offset="0" stop-color="#F6FAFF"/><stop offset="0.5" stop-color="#D6E7FB"/><stop offset="1" stop-color="#A9CBF2"/></linearGradient></defs><path d="M4.6 2.6 H12.999999999999998 L17.4 7.0 V16.900000000000002 Q17.4 17.6 16.7 17.6 H4.6 Q3.9 17.6 3.9 16.900000000000002 V3.3 Q3.9 2.6 4.6 2.6Z" fill="url(#dg5)" stroke="#3F80D2" stroke-width="1.3"/><path d="M12.999999999999998 2.6 Q13.299999999999999 6.7 17.4 7.0" fill="none" stroke="#6FA0E0" stroke-width="0.9"/><rect x="5.5" y="13.000000000000002" width="6.749999999999999" height="2.2" fill="#44ABF2"/><defs><radialGradient id="gc6" cx="40%" cy="35%" r="70%"><stop offset="0" stop-color="#A8E098"/><stop offset="0.6" stop-color="#62BC52"/><stop offset="1" stop-color="#3A9A30"/></radialGradient></defs><circle cx="15.4" cy="14.6" r="3.9" fill="url(#gc6)" stroke="#3C9C34" stroke-width="0.8"/><circle cx="15.4" cy="14.6" r="2.3" fill="none" stroke="#D8F4D0" stroke-width="0.7" opacity="0.8"/><path d="M13.100000000000001 14.6 H17.7 M15.4 12.3 V16.9" stroke="#fff" stroke-width="1.6"/></svg>
<div style="position:absolute;left:298px;top:425px;width:20px;height:20px;border:1.6px solid #1F3F78;border-radius:4px;background:linear-gradient(#FFFFFF 0%,#F4F4F8 45%,#D2D2E0 100%);"></div>
<svg style="position:absolute;left:298px;top:425px;" width="20" height="20" viewBox="0 0 20 20"><defs><linearGradient id="dg7" x1="0" y1="0" x2="1" y2="1"><stop offset="0" stop-color="#F6FAFF"/><stop offset="0.5" stop-color="#D6E7FB"/><stop offset="1" stop-color="#A9CBF2"/></linearGradient></defs><path d="M4.6 2.6 H16.7 Q17.4 2.6 17.4 3.3 V16.900000000000002 Q17.4 17.6 16.7 17.6 H4.6 Q3.9 17.6 3.9 16.900000000000002 V3.3 Q3.9 2.6 4.6 2.6Z" fill="url(#dg7)" stroke="#3F80D2" stroke-width="1.3"/><rect x="5.5" y="13.000000000000002" width="6.749999999999999" height="2.2" fill="#44ABF2"/><path d="M5.6 16.2 L6.6 12.8 L15.2 4.2 L17.6 6.6 L9 15.2Z" fill="#F8D048" stroke="#B07818" stroke-width="0.8"/><path d="M15.2 4.2 L16 3.4 Q16.6 2.8 17.2 3.4 L18.4 4.6 Q19 5.2 18.4 5.8 L17.6 6.6Z" fill="#F0A868" stroke="#B07818" stroke-width="0.7"/><path d="M5.6 16.2 L6.6 12.8 L9 15.2Z" fill="#E8C090"/><path d="M7.2 12.2 L14.6 4.8" stroke="#FFF0B0" stroke-width="0.8"/></svg>
<div class="t" style="left:345.00px;top:428px;font-size:12px;line-height:12px;color:#2222EE;font-weight:bold;font-family:'Liberation Serif', serif;">POINT</div>
<div class="t" style="left:14.00px;top:453px;font-size:12px;line-height:12px;letter-spacing:-0.077px;">DISPLAY/Animation/Scenario</div>
<svg style="position:absolute;left:20px;top:473px;" width="150" height="150" viewBox="0 0 150 150"><rect width="150" height="150" fill="#000"/><rect x="11.5" y="11.5" width="128" height="128" fill="none" stroke="#00FFFF"/><line x1="95.7" y1="5.5" x2="24.1" y2="25.9" stroke="#FFFFFF" stroke-width="1" shape-rendering="crispEdges"/><line x1="24.1" y1="25.9" x2="53.8" y2="31" stroke="#FFFFFF" stroke-width="1" shape-rendering="crispEdges"/><line x1="24.1" y1="25.9" x2="8.6" y2="86.2" stroke="#FFFFFF" stroke-width="1" shape-rendering="crispEdges"/><line x1="53.8" y1="31" x2="8.6" y2="86.2" stroke="#FFFFFF" stroke-width="1" shape-rendering="crispEdges"/><line x1="95.7" y1="5.5" x2="141.7" y2="62.9" stroke="#FFFFFF" stroke-width="1" shape-rendering="crispEdges"/><line x1="127" y1="54.3" x2="141.7" y2="62.9" stroke="#FFFFFF" stroke-width="1" shape-rendering="crispEdges"/><line x1="141.7" y1="62.9" x2="127.6" y2="123.8" stroke="#FFFFFF" stroke-width="1" shape-rendering="crispEdges"/><line x1="127" y1="54.3" x2="127.6" y2="123.8" stroke="#FFFFFF" stroke-width="1" shape-rendering="crispEdges"/><line x1="8.6" y1="86.2" x2="72" y2="104.3" stroke="#FFFFFF" stroke-width="1" shape-rendering="crispEdges"/><line x1="72" y1="104.3" x2="127.6" y2="123.8" stroke="#FFFFFF" stroke-width="1" shape-rendering="crispEdges"/><line x1="8.6" y1="86.2" x2="54.8" y2="144.5" stroke="#FFFFFF" stroke-width="1" shape-rendering="crispEdges"/><line x1="127.6" y1="123.8" x2="54.8" y2="144.5" stroke="#FFFFFF" stroke-width="1" shape-rendering="crispEdges"/><line x1="95.7" y1="5.5" x2="53.8" y2="31" stroke="#FF00FF" stroke-width="1" shape-rendering="crispEdges"/><line x1="95.7" y1="5.5" x2="127" y2="54.3" stroke="#FF00FF" stroke-width="1" shape-rendering="crispEdges"/><line x1="53.8" y1="31" x2="127" y2="54.3" stroke="#FF00FF" stroke-width="1" shape-rendering="crispEdges"/><line x1="53.8" y1="31" x2="72" y2="104.3" stroke="#FF00FF" stroke-width="1" shape-rendering="crispEdges"/><line x1="127" y1="54.3" x2="72" y2="104.3" stroke="#FF00FF" stroke-width="1" shape-rendering="crispEdges"/><line x1="72" y1="104.3" x2="54.8" y2="144.5" stroke="#FF00FF" stroke-width="1" shape-rendering="crispEdges"/></svg>
<div style="position:absolute;left:27px;top:640px;width:137px;height:4px;border-top:1px solid #9C9A8C;border-bottom:1px solid #FFFFFF;background:#F4F2E8;border-radius:2px 0 0 2px;"></div>
<svg style="position:absolute;left:0px;top:653px;" width="180" height="10" viewBox="0 0 180 10"><rect x="27" y="0" width="1" height="10" fill="#74725F"/><rect x="34" y="0" width="1" height="10" fill="#74725F"/><rect x="41" y="0" width="1" height="10" fill="#74725F"/><rect x="47" y="0" width="1" height="10" fill="#74725F"/><rect x="54" y="0" width="1" height="10" fill="#74725F"/><rect x="61" y="0" width="1" height="10" fill="#74725F"/><rect x="68" y="0" width="1" height="10" fill="#74725F"/><rect x="75" y="0" width="1" height="10" fill="#74725F"/><rect x="81" y="0" width="1" height="10" fill="#74725F"/><rect x="88" y="0" width="1" height="10" fill="#74725F"/><rect x="95" y="0" width="1" height="10" fill="#74725F"/><rect x="102" y="0" width="1" height="10" fill="#74725F"/><rect x="109" y="0" width="1" height="10" fill="#74725F"/><rect x="115" y="0" width="1" height="10" fill="#74725F"/><rect x="122" y="0" width="1" height="10" fill="#74725F"/><rect x="129" y="0" width="1" height="10" fill="#74725F"/><rect x="136" y="0" width="1" height="10" fill="#74725F"/><rect x="143" y="0" width="1" height="10" fill="#74725F"/><rect x="149" y="0" width="1" height="10" fill="#74725F"/><rect x="156" y="0" width="1" height="10" fill="#74725F"/><rect x="162" y="0" width="1" height="10" fill="#74725F"/></svg>
<svg style="position:absolute;left:83px;top:630px;" width="12" height="24" viewBox="0 0 12 24"><defs><linearGradient id="th2" x1="0" y1="0" x2="1" y2="0"><stop offset="0" stop-color="#FAFAF6"/><stop offset="0.7" stop-color="#F0EFE8"/><stop offset="1" stop-color="#D8D6CC"/></linearGradient></defs><path d="M1.5 1.5 H10.5 V16.5 L6 21.5 L1.5 16.5Z" fill="url(#th2)" stroke="#8A9AB4"/><rect x="1.5" y="1" width="9" height="3.2" fill="#22B828"/><path d="M1.8 16 L6 20.8 L10.2 16" fill="none" stroke="#36C83A" stroke-width="1.3"/></svg>
<div class="t" style="left:24.50px;top:676px;font-size:12px;line-height:12px;letter-spacing:-0.495px;">Delay</div>
<div style="position:absolute;left:69px;top:672px;width:30px;height:21px;border:1px solid #7F9DB9;background:#fff;"></div>
<div class="t" style="left:72.50px;top:676px;font-size:12px;line-height:12px;">80</div>
<div style="position:absolute;left:105px;top:672px;width:19px;height:19px;border:1px solid #1F3F78;border-radius:3px;background:linear-gradient(160deg,#E4ECFC 0%,#A8C0EC 55%,#6C8CD4 100%);"></div>
<svg style="position:absolute;left:105px;top:672px;" width="19" height="19" viewBox="0 0 19 19"><circle cx="9.3" cy="9" r="5.6" fill="#EEF3FC" stroke="#FFFFFF" stroke-width="1.2" opacity="0.95"/><circle cx="9.3" cy="9" r="4" fill="none" stroke="#C8D6F0" stroke-width="0.8"/><rect x="7.5" y="7.2" width="3.6" height="3.6" fill="#4A7CCC"/></svg>
<div style="position:absolute;left:189px;top:474px;width:291px;height:218px;border-right:1px solid #D6D2BE;border-bottom:1px solid #D6D2BE;"></div>
<div style="position:absolute;left:188px;top:473px;width:291px;height:218px;border:1px solid #91A5BE;"></div>
<div style="position:absolute;left:188px;top:452px;width:100px;height:21px;border:1px solid #91A5BE;border-bottom:none;border-radius:3px 3px 0 0;background:#ECE9D8;"></div>
<div style="position:absolute;left:188px;top:452px;width:100px;height:3px;border-radius:3px 3px 0 0;background:linear-gradient(#E68B2C,#FFC73C);"></div>
<div class="t" style="left:197.30px;top:456px;font-size:12px;line-height:12px;letter-spacing:0.140px;">build animation</div>
<div style="position:absolute;left:190px;top:496px;width:287px;height:193px;border-right:1px solid #D6D2BE;border-bottom:1px solid #D6D2BE;"></div>
<div style="position:absolute;left:189px;top:495px;width:287px;height:193px;border:1px solid #91A5BE;"></div>
<div style="position:absolute;left:253px;top:476px;width:62px;height:19px;border:1px solid #91A5BE;border-bottom:none;border-radius:3px 3px 0 0;background:#ECE9D8;"></div>
<div style="position:absolute;left:316px;top:476px;width:59px;height:19px;border:1px solid #91A5BE;border-bottom:none;border-radius:3px 3px 0 0;background:#ECE9D8;"></div>
<div style="position:absolute;left:189px;top:474px;width:64px;height:21px;border:1px solid #91A5BE;border-bottom:none;border-radius:3px 3px 0 0;background:#ECE9D8;"></div>
<div style="position:absolute;left:189px;top:474px;width:64px;height:3px;border-radius:3px 3px 0 0;background:linear-gradient(#E68B2C,#FFC73C);"></div>
<div class="t" style="left:198.00px;top:478px;font-size:12px;line-height:12px;letter-spacing:0.311px;">Rotation</div>
<div class="t" style="left:260.00px;top:480px;font-size:12px;line-height:12px;letter-spacing:-0.122px;">Morphing</div>
<div class="t" style="left:324.30px;top:480px;font-size:12px;line-height:12px;letter-spacing:-0.527px;">Scenario</div>
<div style="position:absolute;left:202px;top:512px;width:13px;height:13px;border:1px solid #1C5180;background:linear-gradient(135deg,#DCDCD7 0%,#F4F4F0 60%,#FFFFFF 100%);"></div>
<svg style="position:absolute;left:203px;top:513px;" width="11" height="11" viewBox="0 0 11 11"><path d="M2.7 4.8 L4.5 7.3 L8.5 2.6" stroke="#21A121" stroke-width="2.3" fill="none" stroke-linecap="butt" stroke-linejoin="miter"/></svg>
<div class="t" style="left:219.40px;top:512px;font-size:12px;line-height:12px;letter-spacing:0.199px;">z-axis (2d)</div>
<div style="position:absolute;left:202px;top:538px;width:13px;height:13px;border:1px solid #1C5180;background:linear-gradient(135deg,#DCDCD7 0%,#F4F4F0 60%,#FFFFFF 100%);"></div>
<div class="t" style="left:219.40px;top:538px;font-size:12px;line-height:12px;letter-spacing:-0.267px;">x-axis</div>
<div style="position:absolute;left:202px;top:564px;width:13px;height:13px;border:1px solid #1C5180;background:linear-gradient(135deg,#DCDCD7 0%,#F4F4F0 60%,#FFFFFF 100%);"></div>
<div class="t" style="left:219.40px;top:564px;font-size:12px;line-height:12px;letter-spacing:-0.267px;">y-axis</div>
<div class="t" style="left:312.00px;top:512px;font-size:12px;line-height:12px;letter-spacing:0.182px;">to angle</div>
<div class="t" style="left:312.00px;top:538px;font-size:12px;line-height:12px;letter-spacing:0.182px;">to angle</div>
<div class="t" style="left:312.00px;top:564px;font-size:12px;line-height:12px;letter-spacing:0.182px;">to angle</div>
<div style="position:absolute;left:374px;top:508px;width:49px;height:21px;border:1px solid #7F9DB9;background:#fff;"></div>
<div class="t" style="left:377.50px;top:512px;font-size:12px;line-height:12px;">360</div>
<div style="position:absolute;left:374px;top:534px;width:49px;height:21px;border:1px solid #7F9DB9;background:#fff;"></div>
<div class="t" style="left:377.50px;top:538px;font-size:12px;line-height:12px;">0</div>
<div style="position:absolute;left:374px;top:560px;width:49px;height:21px;border:1px solid #7F9DB9;background:#fff;"></div>
<div class="t" style="left:377.50px;top:564px;font-size:12px;line-height:12px;">0</div>
<div class="t" style="left:333.90px;top:585px;font-size:12px;line-height:12px;letter-spacing:0.259px;">scale to byte</div>
<div style="position:absolute;left:409px;top:585px;width:13px;height:13px;border:1px solid #1C5180;background:linear-gradient(135deg,#DCDCD7 0%,#F4F4F0 60%,#FFFFFF 100%);"></div>
<svg style="position:absolute;left:410px;top:586px;" width="11" height="11" viewBox="0 0 11 11"><path d="M2.7 4.8 L4.5 7.3 L8.5 2.6" stroke="#21A121" stroke-width="2.3" fill="none" stroke-linecap="butt" stroke-linejoin="miter"/></svg>
<div class="t" style="left:366.10px;top:633px;font-size:12px;line-height:12px;letter-spacing:0.080px;">steps</div>
<div style="position:absolute;left:414px;top:629px;width:49px;height:21px;border:1px solid #7F9DB9;background:#fff;"></div>
<div class="t" style="left:417.50px;top:633px;font-size:12px;line-height:12px;">12</div>
<div style="position:absolute;left:202px;top:660px;width:13px;height:13px;border:1px solid #1C5180;background:linear-gradient(135deg,#DCDCD7 0%,#F4F4F0 60%,#FFFFFF 100%);"></div>
<div class="t" style="left:219.40px;top:660px;font-size:12px;line-height:12px;letter-spacing:-0.420px;">apply HLR</div>
<div style="position:absolute;left:389px;top:656px;width:74px;height:20px;border:1px solid #1F3F78;border-radius:3px;background:linear-gradient(#FFFFFF 0%,#F6F6FA 35%,#E4E4EE 70%,#CFCFDF 100%);"></div>
<svg style="position:absolute;left:389px;top:656px;" width="26" height="20" viewBox="0 0 26 20"><defs><radialGradient id="gc8" cx="40%" cy="35%" r="70%"><stop offset="0" stop-color="#A8E098"/><stop offset="0.6" stop-color="#62BC52"/><stop offset="1" stop-color="#3A9A30"/></radialGradient></defs><circle cx="13" cy="10" r="6.9" fill="url(#gc8)" stroke="#3C9C34" stroke-width="0.8"/><circle cx="13" cy="10" r="5.300000000000001" fill="none" stroke="#D8F4D0" stroke-width="0.7" opacity="0.8"/><path d="M9.6 10.2 L12.2 12.8 L16.6 7.6" stroke="#fff" stroke-width="2.2" fill="none"/></svg>
<div class="t" style="left:414.20px;top:660px;font-size:12px;line-height:12px;letter-spacing:0.538px;">do it</div>
<div style="position:absolute;left:488px;top:474px;width:282px;height:218px;border-right:1px solid #D6D2BE;border-bottom:1px solid #D6D2BE;"></div>
<div style="position:absolute;left:487px;top:473px;width:282px;height:218px;border:1px solid #91A5BE;"></div>
<div style="position:absolute;left:573px;top:454px;width:79px;height:19px;border:1px solid #91A5BE;border-bottom:none;border-radius:3px 3px 0 0;background:#ECE9D8;"></div>
<div style="position:absolute;left:653px;top:454px;width:115px;height:19px;border:1px solid #91A5BE;border-bottom:none;border-radius:3px 3px 0 0;background:#ECE9D8;"></div>
<div style="position:absolute;left:487px;top:452px;width:86px;height:21px;border:1px solid #91A5BE;border-bottom:none;border-radius:3px 3px 0 0;background:#ECE9D8;"></div>
<div style="position:absolute;left:487px;top:452px;width:86px;height:3px;border-radius:3px 3px 0 0;background:linear-gradient(#E68B2C,#FFC73C);"></div>
<div class="t" style="left:496.40px;top:457px;font-size:12px;line-height:12px;letter-spacing:-0.017px;">Mode/Select</div>
<div class="t" style="left:579.00px;top:458px;font-size:12px;line-height:12px;letter-spacing:0.337px;">shortcut list</div>
<div class="t" style="left:661.00px;top:458px;font-size:12px;line-height:12px;letter-spacing:0.313px;">shortcut collection</div>
<div style="position:absolute;left:500px;top:486px;width:13px;height:13px;border:1px solid #1C5180;border-radius:50%;background:linear-gradient(135deg,#DCDCD7 0%,#F4F4F0 60%,#FFFFFF 100%);"></div>
<div class="t" style="left:517.00px;top:486px;font-size:12px;line-height:12px;letter-spacing:-0.037px;">set</div>
<div style="position:absolute;left:500px;top:506px;width:13px;height:13px;border:1px solid #1C5180;border-radius:50%;background:linear-gradient(135deg,#DCDCD7 0%,#F4F4F0 60%,#FFFFFF 100%);"></div>
<div style="position:absolute;left:504px;top:510px;width:5px;height:5px;border-radius:50%;background:#2FB53A;"></div>
<div class="t" style="left:517.00px;top:506px;font-size:12px;line-height:12px;letter-spacing:0.185px;">select point</div>
<div style="position:absolute;left:500px;top:523px;width:13px;height:13px;border:1px solid #1C5180;border-radius:50%;background:linear-gradient(135deg,#DCDCD7 0%,#F4F4F0 60%,#FFFFFF 100%);"></div>
<div class="t" style="left:517.00px;top:523px;font-size:12px;line-height:12px;letter-spacing:0.220px;">select vector</div>
<div style="position:absolute;left:621px;top:486px;width:13px;height:13px;border:1px solid #1C5180;background:linear-gradient(135deg,#DCDCD7 0%,#F4F4F0 60%,#FFFFFF 100%);"></div>
<div class="t" style="left:638.00px;top:486px;font-size:12px;line-height:12px;letter-spacing:-0.099px;">continue</div>
<div style="position:absolute;left:621px;top:506px;width:13px;height:13px;border:1px solid #1C5180;background:linear-gradient(135deg,#DCDCD7 0%,#F4F4F0 60%,#FFFFFF 100%);"></div>
<div class="t" style="left:638.00px;top:506px;font-size:12px;line-height:12px;letter-spacing:0.171px;">points ok</div>
<div style="position:absolute;left:621px;top:523px;width:13px;height:13px;border:1px solid #1C5180;background:linear-gradient(135deg,#DCDCD7 0%,#F4F4F0 60%,#FFFFFF 100%);"></div>
<div class="t" style="left:638.00px;top:523px;font-size:12px;line-height:12px;letter-spacing:-0.201px;">arrows</div>
<div style="position:absolute;left:621px;top:543px;width:13px;height:13px;border:1px solid #1C5180;background:linear-gradient(135deg,#DCDCD7 0%,#F4F4F0 60%,#FFFFFF 100%);"></div>
<div class="t" style="left:638.00px;top:543px;font-size:12px;line-height:12px;letter-spacing:0.530px;">position</div>
<div style="position:absolute;left:621px;top:563px;width:13px;height:13px;border:1px solid #1C5180;background:linear-gradient(135deg,#DCDCD7 0%,#F4F4F0 60%,#FFFFFF 100%);"></div>
<div class="t" style="left:638.00px;top:563px;font-size:12px;line-height:12px;letter-spacing:0.054px;">moves visible</div>
<div style="position:absolute;left:778px;top:476px;width:711px;height:216px;border-right:1px solid #D6D2BE;border-bottom:1px solid #D6D2BE;"></div>
<div style="position:absolute;left:777px;top:475px;width:711px;height:216px;border:1px solid #91A5BE;"></div>
<div style="position:absolute;left:779px;top:456px;width:35px;height:19px;border:1px solid #91A5BE;border-bottom:none;border-radius:3px 3px 0 0;background:#ECE9D8;"></div>
<div style="position:absolute;left:815px;top:456px;width:62px;height:19px;border:1px solid #91A5BE;border-bottom:none;border-radius:3px 3px 0 0;background:#ECE9D8;"></div>
<div style="position:absolute;left:878px;top:456px;width:45px;height:19px;border:1px solid #91A5BE;border-bottom:none;border-radius:3px 3px 0 0;background:#ECE9D8;"></div>
<div style="position:absolute;left:923px;top:454px;width:48px;height:21px;border:1px solid #91A5BE;border-bottom:none;border-radius:3px 3px 0 0;background:#ECE9D8;"></div>
<div style="position:absolute;left:923px;top:454px;width:48px;height:3px;border-radius:3px 3px 0 0;background:linear-gradient(#E68B2C,#FFC73C);"></div>
<div class="t" style="left:787.00px;top:460.5px;font-size:12px;line-height:12px;letter-spacing:-0.671px;">Line</div>
<div class="t" style="left:822.60px;top:460.5px;font-size:12px;line-height:12px;letter-spacing:0.206px;">2d-Tools</div>
<div class="t" style="left:885.40px;top:460.5px;font-size:12px;line-height:12px;letter-spacing:-0.548px;">Figure</div>
<div class="t" style="left:932.00px;top:458px;font-size:12px;line-height:12px;letter-spacing:-0.819px;">Faces</div>
<div style="position:absolute;left:779px;top:476px;width:708px;height:22px;background:linear-gradient(#ECE9D8 0%,#ECE9D8 75%,#E2DFCE 100%);"></div>
<div style="position:absolute;left:817px;top:480px;width:1px;height:14px;background:#CFCCBC;"></div>
<div style="position:absolute;left:818px;top:480px;width:1px;height:14px;background:#FFFFFF;"></div>
<div style="position:absolute;left:1017px;top:480px;width:1px;height:14px;background:#CFCCBC;"></div>
<div style="position:absolute;left:1018px;top:480px;width:1px;height:14px;background:#FFFFFF;"></div>
<div style="position:absolute;left:1470px;top:480px;width:1px;height:14px;background:#CFCCBC;"></div>
<div style="position:absolute;left:1471px;top:480px;width:1px;height:14px;background:#FFFFFF;"></div>
<div class="t" style="left:793.00px;top:481px;font-size:12px;line-height:12px;letter-spacing:0.734px;">id</div>
<div class="t" style="left:907.40px;top:481px;font-size:12px;line-height:12px;letter-spacing:-0.471px;">uids</div>
<div class="t" style="left:1227.00px;top:481px;font-size:12px;line-height:12px;letter-spacing:0.316px;">points</div>
<div style="position:absolute;left:779px;top:498px;width:693px;height:16px;background:#D6D3CB;border-bottom:1px solid #B4B4B4;"></div>
<div style="position:absolute;left:818px;top:498px;width:1px;height:16px;background:#B4B4B4;"></div>
<div style="position:absolute;left:1018px;top:498px;width:1px;height:16px;background:#B4B4B4;"></div>
<div class="t" style="left:809.00px;top:499px;font-size:12px;line-height:12px;letter-spacing:0.350px;">1</div>
<div class="t" style="left:820.40px;top:499px;font-size:12px;line-height:12px;letter-spacing:0.367px;">202610 202611 202615</div>
<div class="t" style="left:1020.40px;top:499px;font-size:12px;line-height:12px;letter-spacing:0.169px;">(x: 126.0, y:0.0, z:78.0) (x: 126.0, y:0.0, z:-78.0) (x: 78.0, y:126.0, z:0.0)</div>
<div style="position:absolute;left:779px;top:514px;width:693px;height:16px;background:#FFFFFF;border-bottom:1px solid #B4B4B4;"></div>
<div style="position:absolute;left:818px;top:514px;width:1px;height:16px;background:#B4B4B4;"></div>
<div style="position:absolute;left:1018px;top:514px;width:1px;height:16px;background:#B4B4B4;"></div>
<div class="t" style="left:809.00px;top:515px;font-size:12px;line-height:12px;letter-spacing:0.350px;">2</div>
<div class="t" style="left:820.40px;top:515px;font-size:12px;line-height:12px;letter-spacing:0.335px;">202610 202616 202611</div>
<div class="t" style="left:1020.40px;top:515px;font-size:12px;line-height:12px;letter-spacing:0.166px;">(x: 126.0, y:0.0, z:78.0) (x: 78.0, y:-126.0, z:0.0) (x: 126.0, y:0.0, z:-78.0)</div>
<div style="position:absolute;left:779px;top:530px;width:693px;height:16px;background:#FFFFFF;border-bottom:1px solid #B4B4B4;"></div>
<div style="position:absolute;left:818px;top:530px;width:1px;height:16px;background:#B4B4B4;"></div>
<div style="position:absolute;left:1018px;top:530px;width:1px;height:16px;background:#B4B4B4;"></div>
<div class="t" style="left:802.87px;top:531px;font-size:12px;line-height:12px;letter-spacing:0.350px;">11</div>
<div class="t" style="left:820.40px;top:531px;font-size:12px;line-height:12px;letter-spacing:0.320px;">202620 202609 202610</div>
<div class="t" style="left:1020.40px;top:531px;font-size:12px;line-height:12px;letter-spacing:0.169px;">(x: 0.0, y:78.0, z:126.0) (x: 0.0, y:-78.0, z:126.0) (x: 126.0, y:0.0, z:78.0)</div>
<div style="position:absolute;left:779px;top:546px;width:693px;height:16px;background:#FFFFFF;border-bottom:1px solid #B4B4B4;"></div>
<div style="position:absolute;left:818px;top:546px;width:1px;height:16px;background:#B4B4B4;"></div>
<div style="position:absolute;left:1018px;top:546px;width:1px;height:16px;background:#B4B4B4;"></div>
<div class="t" style="left:801.98px;top:547px;font-size:12px;line-height:12px;letter-spacing:0.350px;">14</div>
<div class="t" style="left:820.40px;top:547px;font-size:12px;line-height:12px;letter-spacing:0.320px;">202610 202615 202620</div>
<div class="t" style="left:1020.40px;top:547px;font-size:12px;line-height:12px;letter-spacing:0.174px;">(x: 126.0, y:0.0, z:78.0) (x: 78.0, y:126.0, z:0.0) (x: 0.0, y:78.0, z:126.0)</div>
<div style="position:absolute;left:779px;top:562px;width:693px;height:16px;background:#FFFFFF;border-bottom:1px solid #B4B4B4;"></div>
<div style="position:absolute;left:818px;top:562px;width:1px;height:16px;background:#B4B4B4;"></div>
<div style="position:absolute;left:1018px;top:562px;width:1px;height:16px;background:#B4B4B4;"></div>
<div class="t" style="left:801.98px;top:563px;font-size:12px;line-height:12px;letter-spacing:0.350px;">18</div>
<div class="t" style="left:820.40px;top:563px;font-size:12px;line-height:12px;letter-spacing:0.320px;">202616 202610 202609</div>
<div class="t" style="left:1020.40px;top:563px;font-size:12px;line-height:12px;letter-spacing:0.166px;">(x: 78.0, y:-126.0, z:0.0) (x: 126.0, y:0.0, z:78.0) (x: 0.0, y:-78.0, z:126.0)</div>
<div style="position:absolute;left:779px;top:578px;width:693px;height:16px;background:#FFFFFF;border-bottom:1px solid #B4B4B4;"></div>
<div style="position:absolute;left:818px;top:578px;width:1px;height:16px;background:#B4B4B4;"></div>
<div style="position:absolute;left:1018px;top:578px;width:1px;height:16px;background:#B4B4B4;"></div>
<div class="t" style="left:809.00px;top:579px;font-size:12px;line-height:12px;letter-spacing:0.350px;">7</div>
<div class="t" style="left:820.40px;top:579px;font-size:12px;line-height:12px;letter-spacing:0.335px;">202618 202619 202611</div>
<div class="t" style="left:1020.40px;top:579px;font-size:12px;line-height:12px;letter-spacing:0.163px;">(x: 0.0, y:-78.0, z:-126.0) (x: 0.0, y:78.0, z:-126.0) (x: 126.0, y:0.0, z:-78.0)</div>
<div style="position:absolute;left:779px;top:594px;width:693px;height:16px;background:#FFFFFF;border-bottom:1px solid #B4B4B4;"></div>
<div style="position:absolute;left:818px;top:594px;width:1px;height:16px;background:#B4B4B4;"></div>
<div style="position:absolute;left:1018px;top:594px;width:1px;height:16px;background:#B4B4B4;"></div>
<div class="t" style="left:801.98px;top:595px;font-size:12px;line-height:12px;letter-spacing:0.350px;">13</div>
<div class="t" style="left:820.40px;top:595px;font-size:12px;line-height:12px;letter-spacing:0.367px;">202615 202611 202619</div>
<div class="t" style="left:1020.40px;top:595px;font-size:12px;line-height:12px;letter-spacing:0.166px;">(x: 78.0, y:126.0, z:0.0) (x: 126.0, y:0.0, z:-78.0) (x: 0.0, y:78.0, z:-126.0)</div>
<div style="position:absolute;left:1472px;top:497px;width:15px;height:112px;background:#F3F2EC;border-left:1px solid #E6E4DA;"></div>
<svg style="position:absolute;left:1472px;top:498px;" width="15" height="15" viewBox="0 0 15 15"><rect x="0.5" y="0.5" width="14" height="14" rx="2" fill="#C8DAF8" stroke="#9AB4E0"/><path d="M3.5 9.5 L7.5 5.5 L11.5 9.5" stroke="#4D6185" stroke-width="1.8" fill="none"/></svg>
<svg style="position:absolute;left:1472px;top:513px;" width="15" height="26" viewBox="0 0 15 26"><rect x="0.5" y="0.5" width="14" height="25" rx="2" fill="#C8DAF8" stroke="#9AB4E0"/><path d="M4.5 9.5 H10.5 M4.5 11.5 H10.5 M4.5 13.5 H10.5 M4.5 15.5 H10.5" stroke="#8AA4D0"/></svg>
<svg style="position:absolute;left:1472px;top:594px;" width="15" height="15" viewBox="0 0 15 15"><rect x="0.5" y="0.5" width="14" height="14" rx="2" fill="#C8DAF8" stroke="#9AB4E0"/><path d="M3.5 5.5 L7.5 9.5 L11.5 5.5" stroke="#4D6185" stroke-width="1.8" fill="none"/></svg>
<div style="position:absolute;left:778px;top:630px;width:121px;height:21px;border:1px solid #1F3F78;border-radius:3px;background:linear-gradient(#FFFFFF 0%,#F6F6FA 35%,#E4E4EE 70%,#CFCFDF 100%);"></div>
<div class="t" style="left:783.40px;top:635px;font-size:12px;line-height:12px;letter-spacing:0.011px;">add selected as face</div>
<div style="position:absolute;left:778px;top:657px;width:121px;height:21px;border:1px solid #1F3F78;border-radius:3px;background:linear-gradient(#FFFFFF 0%,#F6F6FA 35%,#E4E4EE 70%,#CFCFDF 100%);"></div>
<div class="t" style="left:805.30px;top:662px;font-size:12px;line-height:12px;letter-spacing:-0.430px;">execute HLR</div>
<div style="position:absolute;left:1368px;top:630px;width:119px;height:21px;border:1px solid #1F3F78;border-radius:3px;background:linear-gradient(#FFFFFF 0%,#F6F6FA 35%,#E4E4EE 70%,#CFCFDF 100%);"></div>
<div class="t" style="left:1373.50px;top:635px;font-size:12px;line-height:12px;letter-spacing:0.139px;">delete from face list</div>
<div style="position:absolute;left:4px;top:705px;width:1484px;height:151px;border:1px solid #ACA899;"></div>
<div style="position:absolute;left:8px;top:701px;width:117px;height:8px;background:#ECE9D8;"></div>
<div class="t" style="left:10.00px;top:700px;font-size:11px;line-height:11px;letter-spacing:0.729px;color:#9C9C9C;">vectorlists collection</div>
<div class="t" style="left:12.00px;top:715px;font-size:12px;line-height:12px;letter-spacing:-0.672px;">Count</div>
<div style="position:absolute;left:49px;top:711px;width:30px;height:19px;border:1px solid #7F9DB9;background:#fff;"></div>
<div class="t" style="left:52.50px;top:714px;font-size:12px;line-height:12px;">0</div>
<div class="t" style="left:92.00px;top:715px;font-size:12px;line-height:12px;letter-spacing:-0.474px;">now</div>
<div style="position:absolute;left:122px;top:711px;width:30px;height:19px;border:1px solid #7F9DB9;background:#fff;"></div>
<div style="position:absolute;left:163px;top:711px;width:13px;height:13px;border:1px solid #1C5180;border-radius:50%;background:linear-gradient(135deg,#DCDCD7 0%,#F4F4F0 60%,#FFFFFF 100%);"></div>
<div style="position:absolute;left:167px;top:715px;width:5px;height:5px;border-radius:50%;background:#2FB53A;"></div>
<div class="t" style="left:180.40px;top:711px;font-size:12px;line-height:12px;letter-spacing:0.030px;">animation</div>
<div style="position:absolute;left:163px;top:731px;width:13px;height:13px;border:1px solid #1C5180;border-radius:50%;background:linear-gradient(135deg,#DCDCD7 0%,#F4F4F0 60%,#FFFFFF 100%);"></div>
<div class="t" style="left:180.40px;top:731px;font-size:12px;line-height:12px;letter-spacing:-0.441px;">scenario</div>
<div style="position:absolute;left:242px;top:708px;width:110px;height:20px;border:1px solid #1F3F78;border-radius:3px;background:linear-gradient(#FFFFFF 0%,#F6F6FA 35%,#E4E4EE 70%,#CFCFDF 100%);"></div>
<svg style="position:absolute;left:242px;top:708px;" width="26" height="20" viewBox="0 0 26 20"><defs><radialGradient id="gc9" cx="40%" cy="35%" r="70%"><stop offset="0" stop-color="#A8E098"/><stop offset="0.6" stop-color="#62BC52"/><stop offset="1" stop-color="#3A9A30"/></radialGradient></defs><circle cx="13" cy="10" r="6.9" fill="url(#gc9)" stroke="#3C9C34" stroke-width="0.8"/><circle cx="13" cy="10" r="5.300000000000001" fill="none" stroke="#D8F4D0" stroke-width="0.7" opacity="0.8"/><path d="M9.4 10 H16.6 M13 6.4 V13.6" stroke="#fff" stroke-width="2.6"/></svg>
<div class="t" style="left:267.00px;top:712px;font-size:12px;line-height:12px;letter-spacing:-0.137px;">add current</div>
<div style="position:absolute;left:242px;top:734px;width:110px;height:19px;border:1px solid #C9C7BA;border-radius:3px;background:linear-gradient(#F7F7F4,#EEEDE5);"></div>
<svg style="position:absolute;left:242px;top:734px;" width="26" height="19" viewBox="0 0 26 19"><path d="M7 3 H19 V8.5 L21.2 12.3 L17.6 17.2 V15 H7Z" fill="#A2A2A2"/><path d="M13 11 H17.5 V9.5 L20 12.3 L17.5 15 V13.5 H13Z" fill="#B8B8B8"/></svg>
<div class="t" style="left:267.00px;top:738px;font-size:12px;line-height:12px;letter-spacing:-0.022px;color:#A8A8A8;">apply</div>
<div style="position:absolute;left:12px;top:733px;width:20px;height:20px;border:1.6px solid #1F3F78;border-radius:4px;background:linear-gradient(#FFFFFF 0%,#F4F4F8 45%,#D2D2E0 100%);"></div>
<svg style="position:absolute;left:12px;top:733px;" width="20" height="20" viewBox="0 0 20 20"><defs><linearGradient id="dg1" x1="0" y1="0" x2="1" y2="1"><stop offset="0" stop-color="#F6FAFF"/><stop offset="0.5" stop-color="#D6E7FB"/><stop offset="1" stop-color="#A9CBF2"/></linearGradient></defs><path d="M4.6 2.6 H12.999999999999998 L17.4 7.0 V16.900000000000002 Q17.4 17.6 16.7 17.6 H4.6 Q3.9 17.6 3.9 16.900000000000002 V3.3 Q3.9 2.6 4.6 2.6Z" fill="url(#dg1)" stroke="#3F80D2" stroke-width="1.3"/><path d="M12.999999999999998 2.6 Q13.299999999999999 6.7 17.4 7.0" fill="none" stroke="#6FA0E0" stroke-width="0.9"/><rect x="5.5" y="13.000000000000002" width="6.749999999999999" height="2.2" fill="#44ABF2"/><path d="M9.3 11.6 H13.6 V9.2 L18.8 13.4 L13.6 17.6 V15.2 H9.3Z" fill="#7ACB66" stroke="#2E8A24" stroke-width="0.9" stroke-linejoin="round"/></svg>
<div style="position:absolute;left:38px;top:733px;width:20px;height:20px;border:1.6px solid #1F3F78;border-radius:4px;background:linear-gradient(#FFFFFF 0%,#F4F4F8 45%,#D2D2E0 100%);"></div>
<svg style="position:absolute;left:38px;top:733px;" width="20" height="20" viewBox="0 0 20 20"><defs><linearGradient id="dg2" x1="0" y1="0" x2="1" y2="1"><stop offset="0" stop-color="#F6FAFF"/><stop offset="0.5" stop-color="#D6E7FB"/><stop offset="1" stop-color="#A9CBF2"/></linearGradient></defs><path d="M4.6 2.6 H12.999999999999998 L17.4 7.0 V16.900000000000002 Q17.4 17.6 16.7 17.6 H4.6 Q3.9 17.6 3.9 16.900000000000002 V3.3 Q3.9 2.6 4.6 2.6Z" fill="url(#dg2)" stroke="#3F80D2" stroke-width="1.3"/><path d="M12.999999999999998 2.6 Q13.299999999999999 6.7 17.4 7.0" fill="none" stroke="#6FA0E0" stroke-width="0.9"/><rect x="5.5" y="13.000000000000002" width="6.749999999999999" height="2.2" fill="#44ABF2"/><rect x="9.5" y="8.4" width="9.2" height="9.4" rx="0.8" fill="#4A82D4" stroke="#2C5CA8" stroke-width="0.8"/><rect x="11" y="9.1" width="6.2" height="2.6" fill="#FFFFFF"/><rect x="12.7" y="9.4" width="1" height="1.6" fill="#2C5CA8"/><rect x="10.9" y="14" width="6.4" height="3.2" fill="#F4F8FF"/><rect x="12" y="14.9" width="4.2" height="1.5" fill="#8CCB40"/></svg>
<div style="position:absolute;left:64px;top:737px;width:13px;height:13px;border:1px solid #1C5180;background:linear-gradient(135deg,#DCDCD7 0%,#F4F4F0 60%,#FFFFFF 100%);"></div>
<svg style="position:absolute;left:65px;top:738px;" width="11" height="11" viewBox="0 0 11 11"><path d="M2.7 4.8 L4.5 7.3 L8.5 2.6" stroke="#21A121" stroke-width="2.3" fill="none" stroke-linecap="butt" stroke-linejoin="miter"/></svg>
<div class="t" style="left:81.00px;top:737px;font-size:12px;line-height:12px;letter-spacing:0.156px;">edit on select</div>
<div style="position:absolute;left:362px;top:708px;width:110px;height:20px;border:1px solid #1F3F78;border-radius:3px;background:linear-gradient(#FFFFFF 0%,#F6F6FA 35%,#E4E4EE 70%,#CFCFDF 100%);"></div>
<svg style="position:absolute;left:362px;top:708px;" width="26" height="20" viewBox="0 0 26 20"><defs><radialGradient id="gc10" cx="40%" cy="35%" r="70%"><stop offset="0" stop-color="#A8E098"/><stop offset="0.6" stop-color="#62BC52"/><stop offset="1" stop-color="#3A9A30"/></radialGradient></defs><circle cx="13" cy="10" r="6.9" fill="url(#gc10)" stroke="#3C9C34" stroke-width="0.8"/><circle cx="13" cy="10" r="5.300000000000001" fill="none" stroke="#D8F4D0" stroke-width="0.7" opacity="0.8"/><path d="M9.4 10 H16.6 M13 6.4 V13.6" stroke="#fff" stroke-width="2.6"/></svg>
<div class="t" style="left:387.10px;top:712px;font-size:12px;line-height:12px;letter-spacing:-0.056px;">add view</div>
<div style="position:absolute;left:363px;top:738px;width:13px;height:13px;border:1px solid #1C5180;background:linear-gradient(135deg,#DCDCD7 0%,#F4F4F0 60%,#FFFFFF 100%);"></div>
<div class="t" style="left:380.20px;top:738px;font-size:12px;line-height:12px;letter-spacing:0.180px;">auto apply</div>
<div style="position:absolute;left:513px;top:708px;width:110px;height:20px;border:1px solid #1F3F78;border-radius:3px;background:linear-gradient(#FFFFFF 0%,#F6F6FA 35%,#E4E4EE 70%,#CFCFDF 100%);"></div>
<svg style="position:absolute;left:513px;top:708px;" width="50" height="20" viewBox="0 0 50 20"><path d="M27.5 8.4 Q29.5 4.6 35 5.6" fill="none" stroke="#3C9A30" stroke-width="2.8"/><path d="M27.5 8.4 Q29.5 4.6 35 5.6" fill="none" stroke="#8AD474" stroke-width="1.1"/><path d="M34.2 2.4 L38.6 6.2 L34.2 9.6Z" fill="#6CC058" stroke="#3C9A30" stroke-width="0.6"/><path d="M38.2 11.4 Q36.6 15.2 31 14.4" fill="none" stroke="#3C9A30" stroke-width="2.8"/><path d="M38.2 11.4 Q36.6 15.2 31 14.4" fill="none" stroke="#8AD474" stroke-width="1.1"/><path d="M31.8 10.8 L27.4 14.4 L31.8 17.8Z" fill="#6CC058" stroke="#3C9A30" stroke-width="0.6"/></svg>
<div class="t" style="left:558.10px;top:712px;font-size:12px;line-height:12px;letter-spacing:-0.718px;">Reverse</div>
<div style="position:absolute;left:513px;top:733px;width:40px;height:20px;border:1px solid #1F3F78;border-radius:3px;background:linear-gradient(#FFFFFF 0%,#F6F6FA 35%,#E4E4EE 70%,#CFCFDF 100%);"></div>
<svg style="position:absolute;left:513px;top:733px;" width="40" height="20" viewBox="0 0 40 20"><path d="M13 10 L17.6 5.6 V8.4 H26.8 V11.8 H17.6 V14.4Z" fill="#7ACB66" stroke="#2E8A24" stroke-width="0.9" stroke-linejoin="round"/></svg>
<div style="position:absolute;left:582px;top:733px;width:40px;height:20px;border:1px solid #1F3F78;border-radius:3px;background:linear-gradient(#FFFFFF 0%,#F6F6FA 35%,#E4E4EE 70%,#CFCFDF 100%);"></div>
<svg style="position:absolute;left:582px;top:733px;" width="40" height="20" viewBox="0 0 40 20"><path d="M27 10 L22.4 5.6 V8.4 H13.2 V11.8 H22.4 V14.4Z" fill="#7ACB66" stroke="#2E8A24" stroke-width="0.9" stroke-linejoin="round"/></svg>
<div style="position:absolute;left:632px;top:708px;width:110px;height:20px;border:1px solid #1F3F78;border-radius:3px;background:linear-gradient(#FFFFFF 0%,#F6F6FA 35%,#E4E4EE 70%,#CFCFDF 100%);"></div>
<svg style="position:absolute;left:632px;top:708px;" width="26" height="20" viewBox="0 0 26 20"><defs><radialGradient id="rc11" cx="40%" cy="35%" r="70%"><stop offset="0" stop-color="#F8A898"/><stop offset="0.6" stop-color="#E8604C"/><stop offset="1" stop-color="#D04030"/></radialGradient></defs><circle cx="13" cy="10" r="6.9" fill="url(#rc11)" stroke="#D04838" stroke-width="0.8"/><circle cx="13" cy="10" r="5.300000000000001" fill="none" stroke="#FFD8D0" stroke-width="0.7" opacity="0.8"/><path d="M13 5.4 V11.2" stroke="#fff" stroke-width="2.3"/><rect x="11.85" y="12.3" width="2.3" height="2.2" fill="#fff"/></svg>
<div class="t" style="left:657.10px;top:712px;font-size:12px;line-height:12px;">delete</div>
<div style="position:absolute;left:632px;top:733px;width:110px;height:20px;border:1px solid #1F3F78;border-radius:3px;background:linear-gradient(#FFFFFF 0%,#F6F6FA 35%,#E4E4EE 70%,#CFCFDF 100%);"></div>
<svg style="position:absolute;left:632px;top:733px;" width="26" height="20" viewBox="0 0 26 20"><text x="6.4" y="12.8" textLength="13.2" lengthAdjust="spacingAndGlyphs" font-family="Liberation Sans" font-weight="bold" font-size="8.2" fill="#FFFFFF" stroke="#F7941D" stroke-width="2.2" stroke-linejoin="round" paint-order="stroke">NEW</text></svg>
<div class="t" style="left:657.10px;top:737px;font-size:12px;line-height:12px;letter-spacing:-0.303px;">clear</div>
<div style="position:absolute;left:752px;top:708px;width:110px;height:20px;border:1px solid #1F3F78;border-radius:3px;background:linear-gradient(#FFFFFF 0%,#F6F6FA 35%,#E4E4EE 70%,#CFCFDF 100%);"></div>
<svg style="position:absolute;left:752px;top:708px;" width="26" height="20" viewBox="0 0 26 20"><path d="M6 6.5 L14 3" stroke="#808080" stroke-width="0.9"/><circle cx="6" cy="14.2" r="1.3" fill="#fff" stroke="#666" stroke-width="0.9"/><circle cx="14.4" cy="6.4" r="1.3" fill="#fff" stroke="#666" stroke-width="0.9"/><path d="M6.7 13.5 L14 7" stroke="#808080" stroke-width="0.9"/><path d="M11 18 Q9.5 12 11.6 10 Q14 8.4 18.4 10" fill="none" stroke="#8CB8EC" stroke-width="1.8"/><defs><radialGradient id="gc12" cx="40%" cy="35%" r="70%"><stop offset="0" stop-color="#A8E098"/><stop offset="0.6" stop-color="#62BC52"/><stop offset="1" stop-color="#3A9A30"/></radialGradient></defs><circle cx="17.4" cy="15.4" r="3.6" fill="url(#gc12)" stroke="#3C9C34" stroke-width="0.8"/><circle cx="17.4" cy="15.4" r="2.0" fill="none" stroke="#D8F4D0" stroke-width="0.7" opacity="0.8"/><path d="M15.299999999999999 15.4 H19.5 M17.4 13.3 V17.5" stroke="#fff" stroke-width="1.5"/></svg>
<div class="t" style="left:777.80px;top:712px;font-size:12px;line-height:12px;letter-spacing:0.198px;">join</div>
<div style="position:absolute;left:13px;top:769px;width:1471px;height:67px;border:1px solid #000;"></div>
<svg style="position:absolute;left:19px;top:775px;" width="52" height="52" viewBox="0 0 52 52"><rect width="52" height="52" fill="#000"/><line x1="34.5" y1="1.55" x2="8.8" y2="9.6" stroke="#C8C8C8" stroke-width="0.85"/><line x1="8.8" y1="9.6" x2="18.45" y2="11.0" stroke="#C8C8C8" stroke-width="0.85"/><line x1="8.8" y1="9.6" x2="3.0" y2="30.7" stroke="#C8C8C8" stroke-width="0.85"/><line x1="18.45" y1="11.0" x2="3.0" y2="30.7" stroke="#C8C8C8" stroke-width="0.85"/><line x1="34.5" y1="1.55" x2="50.9" y2="23.1" stroke="#C8C8C8" stroke-width="0.85"/><line x1="44.6" y1="19.1" x2="50.9" y2="23.1" stroke="#C8C8C8" stroke-width="0.85"/><line x1="50.9" y1="23.1" x2="44.8" y2="43.8" stroke="#C8C8C8" stroke-width="0.85"/><line x1="44.6" y1="19.1" x2="44.8" y2="43.8" stroke="#C8C8C8" stroke-width="0.85"/><line x1="3.0" y1="30.7" x2="26.1" y2="37.7" stroke="#C8C8C8" stroke-width="0.85"/><line x1="26.1" y1="37.7" x2="44.8" y2="43.8" stroke="#C8C8C8" stroke-width="0.85"/><line x1="3.0" y1="30.7" x2="18.9" y2="50.8" stroke="#C8C8C8" stroke-width="0.85"/><line x1="44.8" y1="43.8" x2="18.9" y2="50.8" stroke="#C8C8C8" stroke-width="0.85"/><line x1="34.5" y1="1.55" x2="18.45" y2="11.0" stroke="#C8C8C8" stroke-width="0.85"/><line x1="34.5" y1="1.55" x2="44.6" y2="19.1" stroke="#C8C8C8" stroke-width="0.85"/><line x1="18.45" y1="11.0" x2="44.6" y2="19.1" stroke="#C8C8C8" stroke-width="0.85"/><line x1="18.45" y1="11.0" x2="26.1" y2="37.7" stroke="#C8C8C8" stroke-width="0.85"/><line x1="44.6" y1="19.1" x2="26.1" y2="37.7" stroke="#C8C8C8" stroke-width="0.85"/><line x1="26.1" y1="37.7" x2="18.9" y2="50.8" stroke="#C8C8C8" stroke-width="0.85"/></svg>
<div style="position:absolute;left:13px;top:836px;width:1472px;height:15px;background:#F9F9F7;border-bottom:1px solid #DEDCD2;border-right:1px solid #DEDCD2;border-left:1px solid #DEDCD2;"></div>
<svg style="position:absolute;left:14px;top:837px;" width="12" height="12" viewBox="0 0 12 12"><defs><linearGradient id="sb1" x1="0" y1="0" x2="1" y2="1"><stop offset="0" stop-color="#FFFFFF"/><stop offset="1" stop-color="#E6E6E2"/></linearGradient></defs><rect width="12" height="12" fill="url(#sb1)"/><path d="M8.6 1.8 L3.8 6.2 L8.6 10.6" stroke="#BDBDBD" stroke-width="2.2" fill="none"/></svg>
<svg style="position:absolute;left:1471px;top:837px;" width="12" height="12" viewBox="0 0 12 12"><rect width="12" height="12" fill="url(#sb1)"/><path d="M3.4 1.8 L8.2 6.2 L3.4 10.6" stroke="#BDBDBD" stroke-width="2.2" fill="none"/></svg>
</div></body></html>
